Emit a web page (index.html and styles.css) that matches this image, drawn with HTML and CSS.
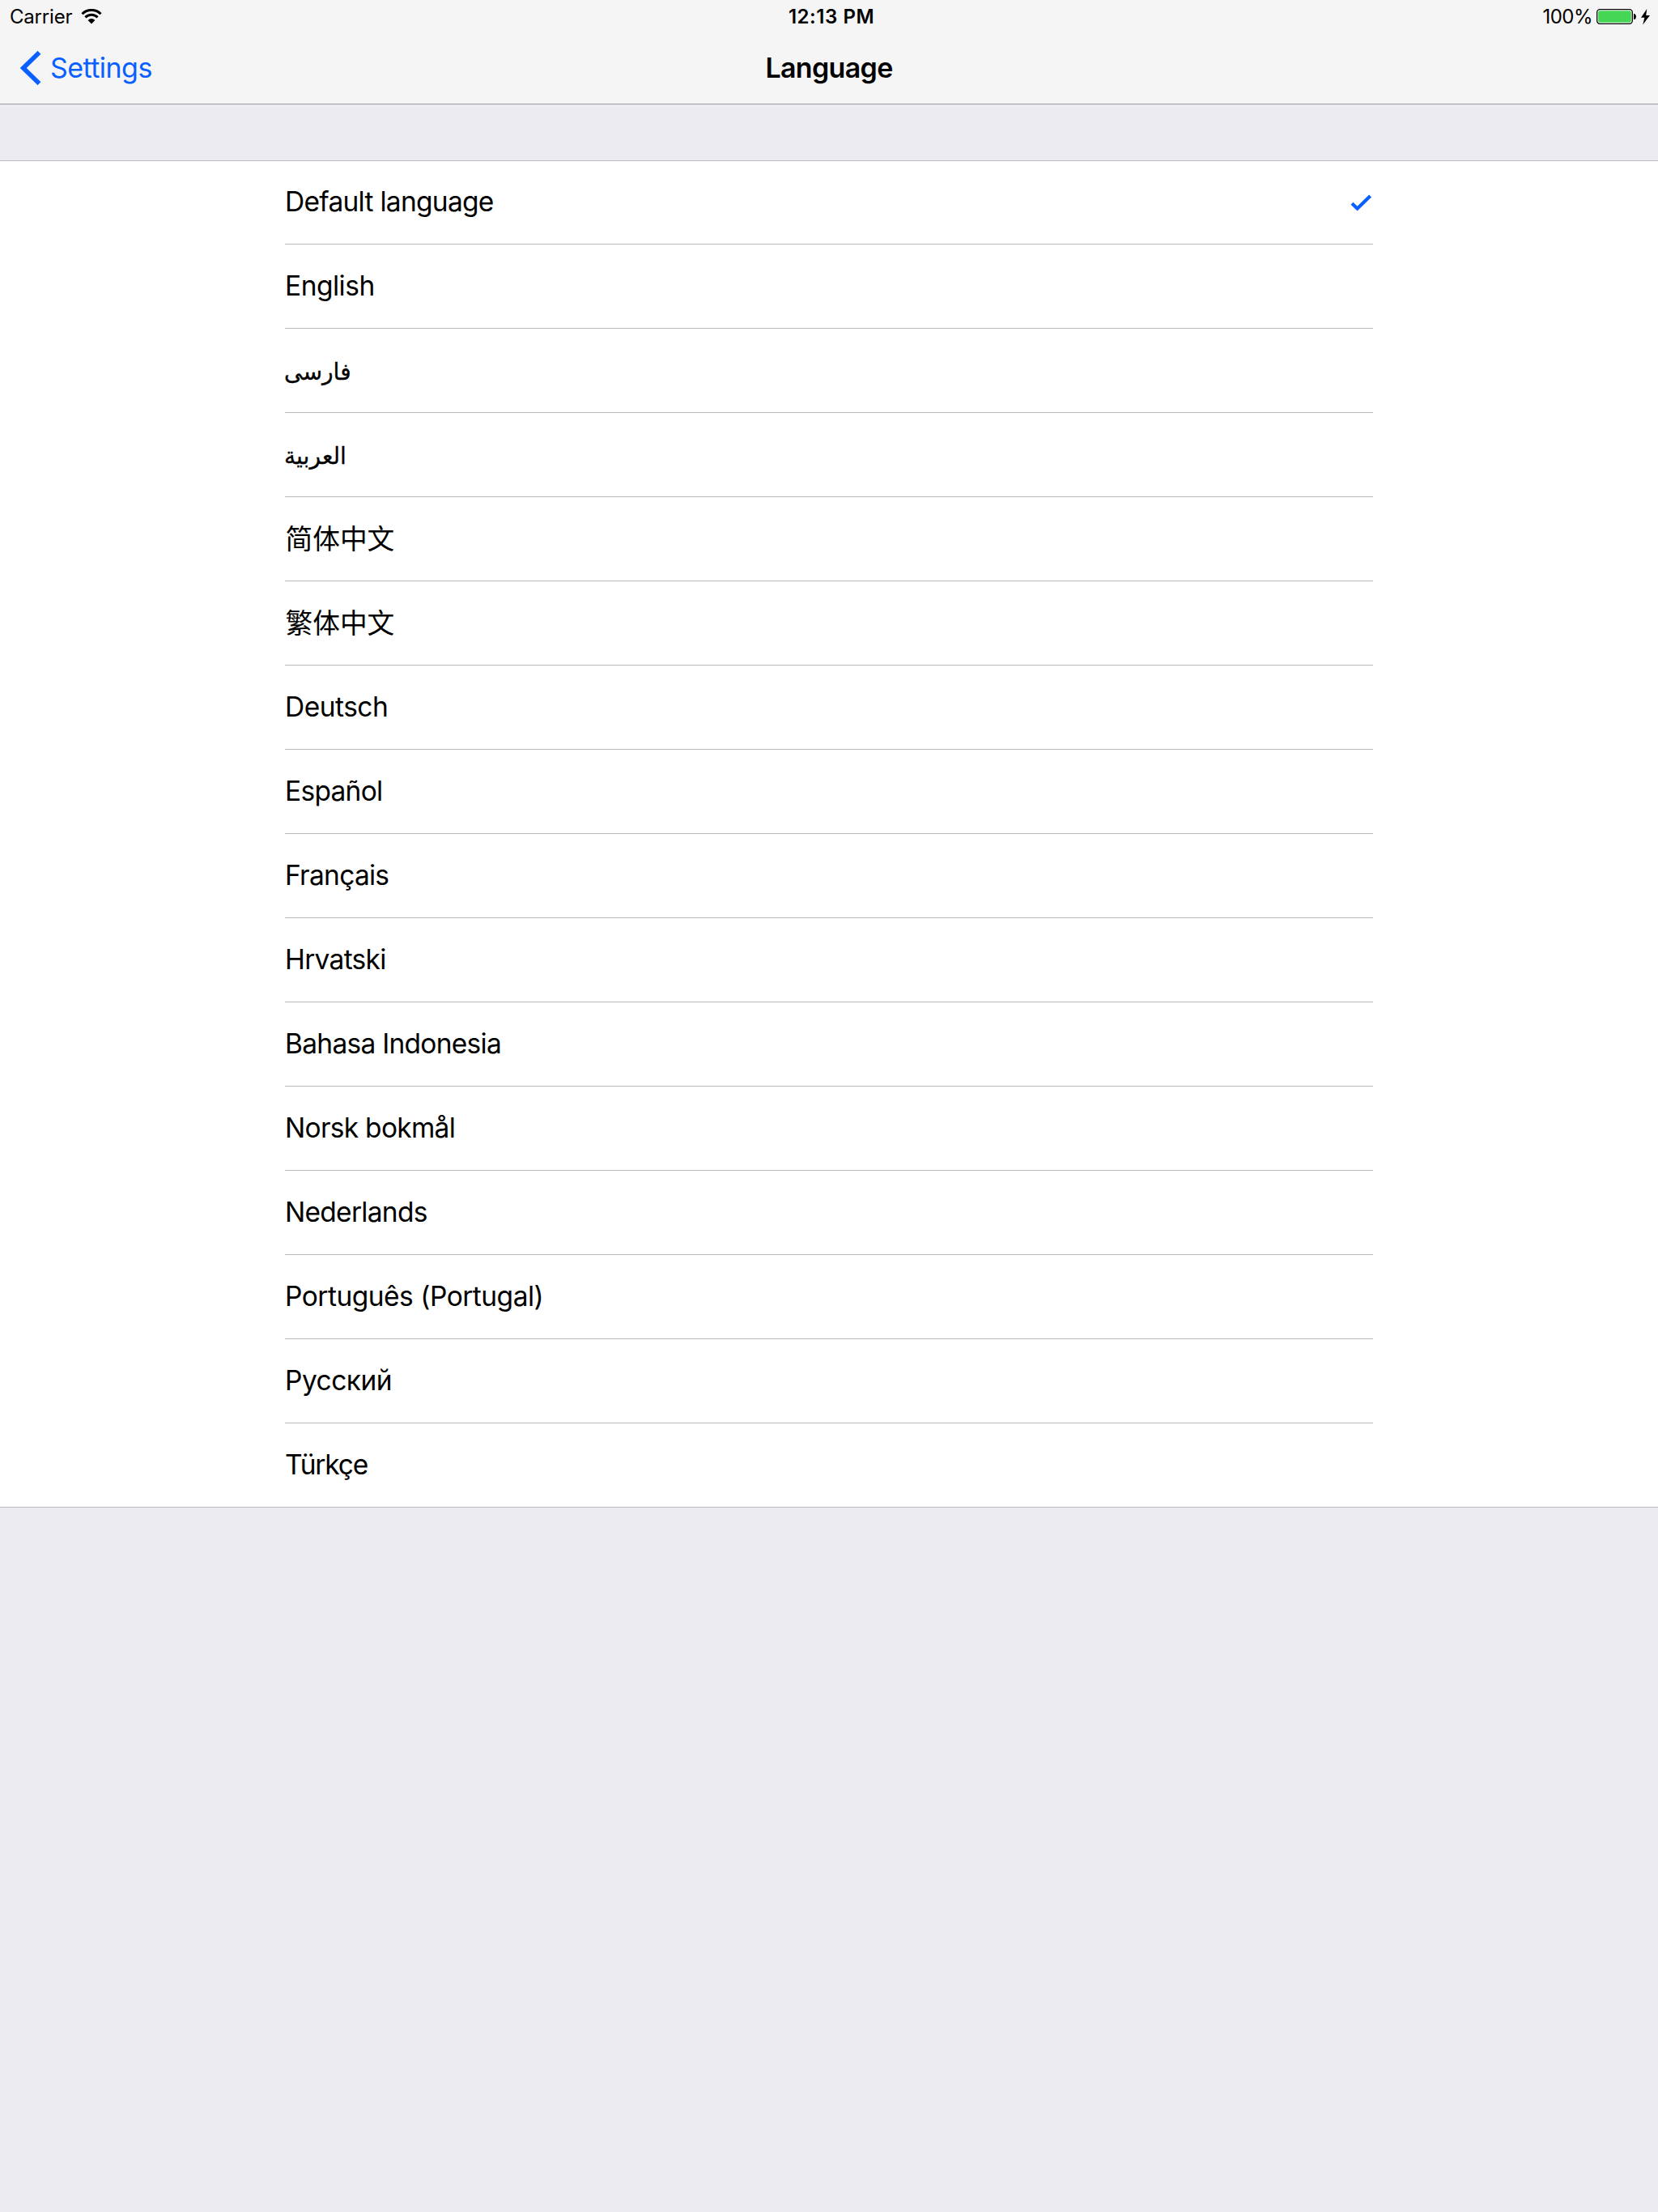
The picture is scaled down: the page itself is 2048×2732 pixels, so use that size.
FILE: index.html
```html
<!DOCTYPE html>
<html lang="en">
<head>
<meta charset="utf-8">
<title>Language</title>
<link rel="stylesheet" href="styles.css">
</head>
<body>
<header class="top">
  <div class="status">
    <div class="status-left"><span class="carrier">Carrier</span>
      <svg class="wifi" width="26" height="20" viewBox="0 0 26 20"><path d="M1.5 6.2a16.2 16.2 0 0 1 23 0M5.4 10.4a10.7 10.7 0 0 1 15.2 0" fill="none" stroke="#000" stroke-width="3"/><path d="M8.6 13.9a6.2 6.2 0 0 1 8.8 0L13 18.4z"/></svg>
    </div>
    <div class="clock">12:13 PM</div>
    <div class="status-right"><span class="percent">100%</span>
      <svg class="battery" width="50" height="20" viewBox="0 0 50 20"><rect x="1.7" y=".7" width="43.6" height="17.6" rx="3.5" fill="#fff" stroke="#000" stroke-width="1.3"/><rect x="3.2" y="2.2" width="40.6" height="14.6" rx="2" fill="#45d655"/><path d="M47 6h1q2 1 2 3.5t-2 3.5h-1z"/></svg>
      <svg class="bolt" width="11" height="20" viewBox="0 0 11 20"><path d="M7.3 0 0 10.8h4.4L2.2 19.5 11 7.9H6.2z"/></svg>
    </div>
  </div>
  <nav class="nav">
    <a class="back"><svg width="26" height="42" viewBox="0 0 26 42"><path d="M23.5 1.8 3.8 21l19.7 19.2" fill="none" stroke="#0a60ff" stroke-width="5.6"/></svg><span class="back-label">Settings</span></a>
    <h1 class="title">Language</h1>
  </nav>
</header>
<ul class="list">
  <li class="row"><span class="name">Default language</span><svg class="check" width="27" height="21" viewBox="0 0 27 21"><path d="M2 11.2 8.6 17.6 24.6 2" fill="none" stroke="#0a60ff" stroke-width="4.2"/></svg></li>
  <li class="row"><span class="name loose">English</span></li>
  <li class="row"><span class="name arabic" lang="fa">فارسی</span></li>
  <li class="row"><span class="name arabic" lang="ar">العربية</span></li>
  <li class="row"><span class="name cjk" lang="zh-Hans">简体中文</span></li>
  <li class="row"><span class="name cjk" lang="zh-Hans">繁体中文</span></li>
  <li class="row"><span class="name loose">Deutsch</span></li>
  <li class="row"><span class="name">Español</span></li>
  <li class="row"><span class="name">Français</span></li>
  <li class="row"><span class="name">Hrvatski</span></li>
  <li class="row"><span class="name">Bahasa Indonesia</span></li>
  <li class="row"><span class="name">Norsk bokmål</span></li>
  <li class="row"><span class="name">Nederlands</span></li>
  <li class="row"><span class="name loose">Português (Portugal)</span></li>
  <li class="row"><span class="name loose">Русский</span></li>
  <li class="row"><span class="name tight">Türkçe</span></li>
</ul>
</body>
</html>
```
FILE: styles.css
```css
* { box-sizing: border-box; }
body { margin: 0; min-height: 2732px; background: #ebebf1; font-family: Inter, "Noto Sans", "Noto Sans CJK SC", sans-serif; color: #000; }

/* Status bar and navigation */
.top { height: 129px; background: #f5f5f5; border-bottom: 1px solid #98989d; }
.status { height: 42px; display: grid; grid-template-columns: 1fr auto 1fr; align-items: center; font-size: 24px; line-height: 42px; }
.status-left { display: flex; align-items: center; gap: 11px; padding-left: 12px; letter-spacing: -0.2px; }
.status-right { display: flex; align-items: center; justify-content: flex-end; gap: 6px; padding-right: 10px; }
.percent { letter-spacing: -0.5px; margin-right: -2px; }
.clock { font-weight: 600; letter-spacing: 0.55px; padding-left: 6px; }
.nav { height: 86px; padding-bottom: 2px; display: grid; grid-template-columns: 1fr auto 1fr; align-items: center; }
.back { display: flex; align-items: center; gap: 11px; padding-left: 25px; color: #0a60ff; font-size: 34px; letter-spacing: -0.55px; }
.back-label { padding-bottom: 2px; }
.title { margin: 0; padding-bottom: 2px; font-size: 34px; font-weight: 600; letter-spacing: -0.67px; }

/* Language list */
.list { margin: 69px 0 0; padding: 0 352px; list-style: none; background: #fff; box-shadow: inset 0 1px #bcbbc1, inset 0 -1px #bcbbc1; }
.row { height: 104px; padding-bottom: 2px; display: flex; align-items: center; justify-content: space-between; border-bottom: 1px solid #bcbbc1; font-size: 33.5px; letter-spacing: -0.72px; }
.loose { letter-spacing: -0.5px; }
.tight { letter-spacing: -1.2px; }
.arabic { margin-left: -1.5px; padding-top: 5px; font-family: "DejaVu Sans", sans-serif; font-size: 29px; letter-spacing: 0; transform: scaleX(0.97); transform-origin: left; -webkit-text-stroke: 0.3px; }
.cjk { padding: 0 0 2px 0.5px; font-size: 33.7px; letter-spacing: 0; }
.check { margin: 3px 1.5px 0 0; }
```
